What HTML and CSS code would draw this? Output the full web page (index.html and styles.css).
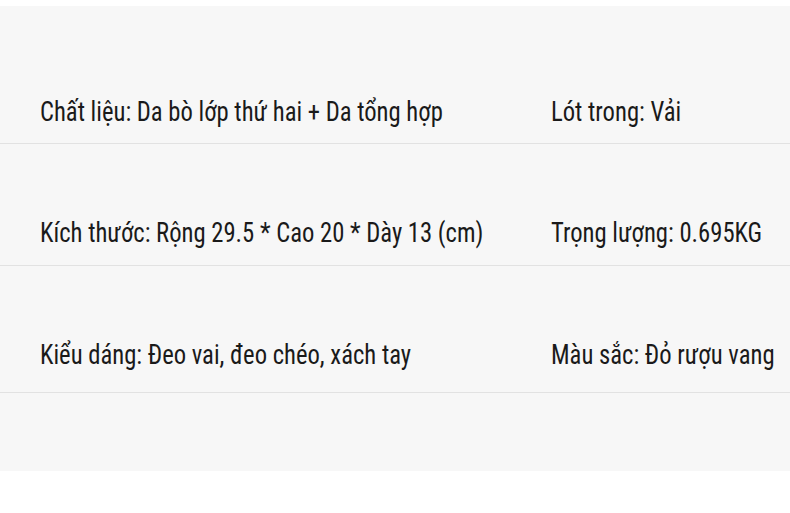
FILE: index.html
```html
<!DOCTYPE html>
<html lang="vi">
<head>
<meta charset="utf-8">
<link rel="stylesheet" href="styles.css">
</head>
<body>
<div class="panel">
  <div class="row row-1">
    <div class="cell cell-left"><span class="txt">Chất liệu: Da bò lớp thứ hai + Da tổng hợp</span></div>
    <div class="cell cell-right"><span class="txt">Lót trong: Vải</span></div>
  </div>
  <div class="row row-2">
    <div class="cell cell-left"><span class="txt">Kích thước: Rộng 29.5 * Cao 20 * Dày 13 (cm)</span></div>
    <div class="cell cell-right"><span class="txt">Trọng lượng: 0.695KG</span></div>
  </div>
  <div class="row row-3">
    <div class="cell cell-left"><span class="txt">Kiểu dáng: Đeo vai, đeo chéo, xách tay</span></div>
    <div class="cell cell-right"><span class="txt">Màu sắc: Đỏ rượu vang</span></div>
  </div>
  <div class="filler"></div>
</div>
</body>
</html>
```
FILE: styles.css
```css
* { box-sizing: border-box; }
html, body { margin: 0; padding: 0; background: #ffffff; }
body {
  width: 790px;
  height: 513px;
  overflow: hidden;
  font-family: "Roboto Condensed", "Liberation Sans Narrow", "Liberation Sans", Arial, sans-serif;
  color: #1a1a1a;
}
.panel {
  margin-top: 6px;
  background: #f7f7f7;
}
.row {
  display: flex;
  align-items: flex-end;
  border-bottom: 1px solid #e2e2e2;
  font-size: 28px;
  line-height: 32px;
}
.row-1 { height: 138px; padding-bottom: 15px; }
.row-2 { height: 122px; padding-bottom: 16px; }
.row-3 { height: 127px; padding-bottom: 21px; }
.cell { white-space: nowrap; flex-shrink: 0; }
.cell-left { width: 551px; padding-left: 40px; }
.cell-right { width: 239px; }
.txt {
  display: inline-block;
  transform: scaleX(0.88);
  transform-origin: left center;
}
.filler { height: 78px; }
```
